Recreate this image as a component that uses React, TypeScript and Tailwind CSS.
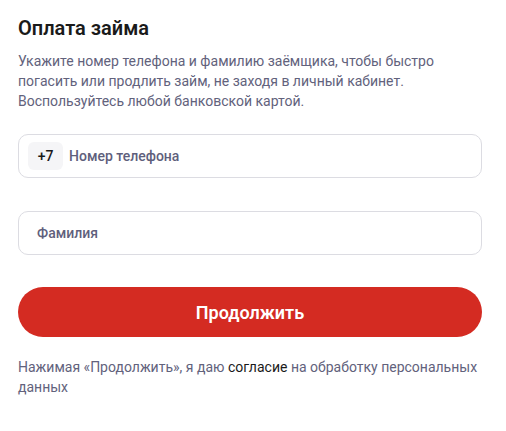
import React from "react";

export default function App() {
  return (
    <div
      className="w-[506px] h-[431px] bg-white pl-[18px] pr-[24px] pt-[15px]"
      style={{ fontFamily: "Roboto, 'Noto Sans', sans-serif" }}
    >
      {/* Header */}
      <h1 className="text-[20px] leading-[26px] font-semibold text-[#1a1a1a]">
        Оплата займа
      </h1>
      <p className="mt-[10px] text-[14px] leading-[20px] text-[#62627c]">
        Укажите номер телефона и фамилию заёмщика, чтобы быстро погасить или
        продлить займ, не заходя в личный кабинет. Воспользуйтесь любой
        банковской картой.
      </p>

      {/* Phone */}
      <div className="mt-[23px] h-[44px] rounded-[10px] border border-[#dcdce2] flex items-center pl-[9px]">
        <div className="h-[28px] w-[35px] rounded-[6px] bg-[#f5f5f7] flex items-center justify-center text-[14px] font-medium text-[#1a1a1a]">
          +7
        </div>
        <span className="ml-[6px] text-[14px] font-medium text-[#5f5f7c]">
          Номер телефона
        </span>
      </div>

      {/* Surname */}
      <div className="mt-[33px] h-[44px] rounded-[10px] border border-[#dcdce2] flex items-center pl-[18px]">
        <span className="text-[14px] font-medium text-[#5f5f7c]">Фамилия</span>
      </div>

      {/* Submit */}
      <button className="mt-[32px] w-full h-[50px] rounded-full bg-[#d42b22] text-white text-[18px] font-semibold">
        Продолжить
      </button>

      <p className="mt-[20px] text-[14px] leading-[20px] text-[#62627c]">
        Нажимая «Продолжить», я даю <span className="text-[#1a1a1a]">согласие</span>{" "}
        на обработку персональных данных
      </p>
    </div>
  );
}
